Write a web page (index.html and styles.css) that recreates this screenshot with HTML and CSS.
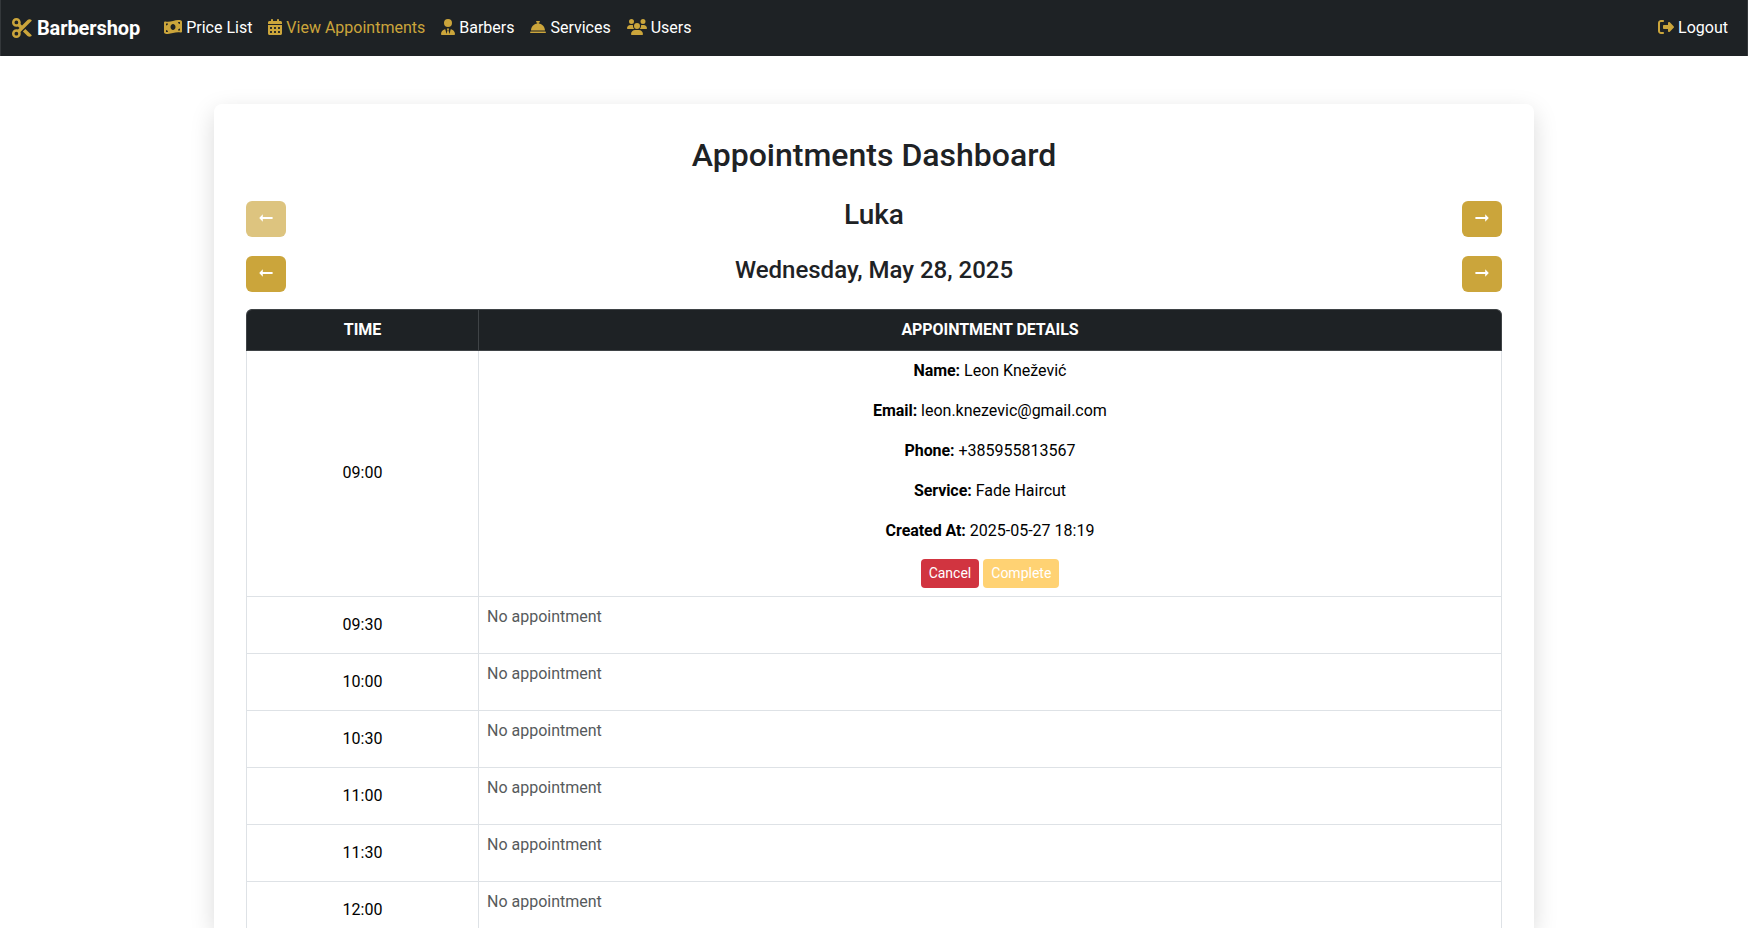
FILE: index.html
```html
<!DOCTYPE html>
<html lang="en">
<head>
<meta charset="utf-8">
<title>Barbershop</title>
<link rel="stylesheet" href="styles.css">
</head>
<body>
<nav class="navbar">
  <a class="brand"><svg class="icon brand-icon" viewBox="0 0 512 512"><path d="M256 192l-39.5-39.5c4.9-12.6 7.5-26.2 7.5-40.5C224 50.1 173.9 0 112 0S0 50.1 0 112s50.1 112 112 112c14.3 0 27.9-2.7 40.5-7.5L192 256l-39.5 39.5c-12.6-4.9-26.2-7.5-40.5-7.5C50.1 288 0 338.1 0 400s50.1 112 112 112s112-50.1 112-112c0-14.3-2.7-27.9-7.5-40.5L499.2 76.8c7.1-7.1 7.1-18.5 0-25.6c-28.3-28.3-74.1-28.3-102.4 0L256 192zm22.6 150.6L396.8 460.8c28.3 28.3 74.1 28.3 102.4 0c7.1-7.1 7.1-18.5 0-25.6L342.6 278.6l-64 64zM64 112a48 48 0 1 1 96 0 48 48 0 1 1 -96 0zm48 240a48 48 0 1 1 0 96 48 48 0 1 1 0-96z"/></svg> <span class="brand-name">Barbershop</span></a>
  <div class="links">
    <a class="link"><svg class="icon w18" viewBox="0 0 576 512"><path d="M0 112.5V422.3c0 18 10.1 35 27 41.3c87 32.5 174 10.3 261-11.9c79.8-20.3 159.6-40.7 239.3-18.9c23 6.3 48.7-9.5 48.7-33.4V89.7c0-18-10.1-35-27-41.3C462 15.9 375 38.1 288 60.3C208.2 80.6 128.4 100.9 48.7 79.1C25.6 72.8 0 88.6 0 112.5zM288 352c-44.2 0-80-43-80-96s35.8-96 80-96s80 43 80 96s-35.8 96-80 96zM64 352c35.3 0 64 28.7 64 64H64V352zm64-208c0 35.3-28.7 64-64 64V144h64zM512 304v64H448c0-35.3 28.7-64 64-64zM448 96h64v64c-35.3 0-64-28.7-64-64z"/></svg> Price List</a>
    <a class="link active"><svg class="icon w14" viewBox="0 0 448 512"><path d="M128 0c17.7 0 32 14.3 32 32V64H288V32c0-17.7 14.3-32 32-32s32 14.3 32 32V64h48c26.5 0 48 21.5 48 48v48H0V112C0 85.5 21.5 64 48 64H96V32c0-17.7 14.3-32 32-32zM0 192H448V464c0 26.5-21.5 48-48 48H48c-26.5 0-48-21.5-48-48V192zm64 80v32c0 8.8 7.2 16 16 16h32c8.8 0 16-7.2 16-16V272c0-8.8-7.2-16-16-16H80c-8.8 0-16 7.2-16 16zm128 0v32c0 8.8 7.2 16 16 16h32c8.8 0 16-7.2 16-16V272c0-8.8-7.2-16-16-16H208c-8.8 0-16 7.2-16 16zm144-16c-8.8 0-16 7.2-16 16v32c0 8.8 7.2 16 16 16h32c8.8 0 16-7.2 16-16V272c0-8.8-7.2-16-16-16H336zM64 400v32c0 8.8 7.2 16 16 16h32c8.8 0 16-7.2 16-16V400c0-8.8-7.2-16-16-16H80c-8.8 0-16 7.2-16 16zm144-16c-8.8 0-16 7.2-16 16v32c0 8.8 7.2 16 16 16h32c8.8 0 16-7.2 16-16V400c0-8.8-7.2-16-16-16H208zm112 16v32c0 8.8 7.2 16 16 16h32c8.8 0 16-7.2 16-16V400c0-8.8-7.2-16-16-16H336c-8.8 0-16 7.2-16 16z"/></svg> View Appointments</a>
    <a class="link"><svg class="icon w14" viewBox="0 0 448 512"><path d="M96 128a128 128 0 1 0 256 0A128 128 0 1 0 96 128zm94.5 200.2l18.6 31L175.8 483.1l-36-146.9c-2-8.1-9.8-13.4-17.9-11.3C51.9 342.4 0 405.8 0 481.3c0 17 13.8 30.7 30.7 30.7H162.5c0 0 0 0 .1 0H168 280h5.5c0 0 0 0 .1 0H417.3c17 0 30.7-13.8 30.7-30.7c0-75.5-51.9-138.9-121.9-156.4c-8.1-2-15.9 3.3-17.9 11.3l-36 146.9L238.9 359.2l18.6-31c6.4-10.7-1.3-24.2-13.7-24.2H224 204.3c-12.4 0-20.1 13.6-13.7 24.2z"/></svg> Barbers</a>
    <a class="link"><svg class="icon w16" viewBox="0 0 512 512"><path d="M216 64c-13.3 0-24 10.7-24 24s10.7 24 24 24h16v33.3C119.6 157.2 32 252.4 32 368H480c0-115.6-87.6-210.8-200-222.7V112h16c13.3 0 24-10.7 24-24s-10.7-24-24-24H256 216zM24 400c-13.3 0-24 10.7-24 24s10.7 24 24 24H488c13.3 0 24-10.7 24-24s-10.7-24-24-24H24z"/></svg> Services</a>
    <a class="link"><svg class="icon w20" viewBox="0 0 640 512"><path d="M144 0a80 80 0 1 1 0 160A80 80 0 1 1 144 0zM512 0a80 80 0 1 1 0 160A80 80 0 1 1 512 0zM0 298.7C0 239.8 47.8 192 106.7 192h42.7c15.9 0 31 3.5 44.6 9.7c-1.3 7.2-1.9 14.7-1.9 22.3c0 38.2 16.8 72.5 43.3 96c-.2 0-.4 0-.7 0H21.3C9.6 320 0 310.4 0 298.7zM405.3 320c-.2 0-.4 0-.7 0c26.6-23.5 43.3-57.8 43.3-96c0-7.6-.7-15-1.9-22.3c13.6-6.3 28.7-9.7 44.6-9.7h42.7C592.2 192 640 239.8 640 298.7c0 11.8-9.6 21.3-21.3 21.3H405.3zM224 224a96 96 0 1 1 192 0 96 96 0 1 1 -192 0zM128 485.3C128 411.7 187.7 352 261.3 352H378.7C452.3 352 512 411.7 512 485.3c0 14.7-11.9 26.7-26.7 26.7H154.7c-14.7 0-26.7-11.9-26.7-26.7z"/></svg> Users</a>
  </div>
  <a class="link logout"><svg class="icon w16" viewBox="0 0 512 512"><path d="M377.9 105.9L500.7 228.7c7.2 7.2 11.3 17.1 11.3 27.3s-4.1 20.1-11.3 27.3L377.9 406.1c-6.4 6.4-15 9.9-24 9.9c-18.7 0-33.9-15.2-33.9-33.9l0-62.1-128 0c-17.7 0-32-14.3-32-32l0-64c0-17.7 14.3-32 32-32l128 0 0-62.1c0-18.7 15.2-33.9 33.9-33.9c9 0 17.6 3.6 24 9.9zM160 96L96 96c-17.7 0-32 14.3-32 32l0 256c0 17.7 14.3 32 32 32l64 0c17.7 0 32 14.3 32 32s-14.3 32-32 32l-64 0c-53 0-96-43-96-96L0 128C0 75 43 32 96 32l64 0c17.7 0 32 14.3 32 32s-14.3 32-32 32z"/></svg> Logout</a>
</nav>
<main class="card">
  <h1 class="title">Appointments Dashboard</h1>
  <div class="switcher">
    <button class="arrow" disabled aria-label="Previous barber"><svg class="arrow-icon" viewBox="0 0 16 10"><path d="M1.2 5 4.8 1.2V4H14.6V6H4.8V8.8Z"/></svg></button>
    <h2 class="barber">Luka</h2>
    <button class="arrow" aria-label="Next barber"><svg class="arrow-icon" viewBox="0 0 16 10"><path d="M14.8 5 11.2 1.2V4H1.4V6H11.2V8.8Z"/></svg></button>
  </div>
  <div class="switcher">
    <button class="arrow" aria-label="Previous day"><svg class="arrow-icon" viewBox="0 0 16 10"><path d="M1.2 5 4.8 1.2V4H14.6V6H4.8V8.8Z"/></svg></button>
    <h3 class="date">Wednesday, May 28, 2025</h3>
    <button class="arrow" aria-label="Next day"><svg class="arrow-icon" viewBox="0 0 16 10"><path d="M14.8 5 11.2 1.2V4H1.4V6H11.2V8.8Z"/></svg></button>
  </div>
  <table class="schedule">
    <colgroup><col class="col-time"><col></colgroup>
    <thead><tr><th>TIME</th><th>APPOINTMENT DETAILS</th></tr></thead>
    <tbody>
      <tr><td class="time">09:00</td><td class="details">
        <p><strong>Name:</strong> Leon Knežević</p>
        <p><strong>Email:</strong> leon.knezevic@gmail.com</p>
        <p><strong>Phone:</strong> +385955813567</p>
        <p><strong>Service:</strong> Fade Haircut</p>
        <p><strong>Created At:</strong> 2025-05-27 18:19</p>
        <div class="actions"><button class="btn cancel">Cancel</button><button class="btn complete" disabled>Complete</button></div>
      </td></tr>
      <tr><td class="time">09:30</td><td class="empty"><p>No appointment</p></td></tr>
      <tr><td class="time">10:00</td><td class="empty"><p>No appointment</p></td></tr>
      <tr><td class="time">10:30</td><td class="empty"><p>No appointment</p></td></tr>
      <tr><td class="time">11:00</td><td class="empty"><p>No appointment</p></td></tr>
      <tr><td class="time">11:30</td><td class="empty"><p>No appointment</p></td></tr>
      <tr><td class="time">12:00</td><td class="empty"><p>No appointment</p></td></tr>
    </tbody>
  </table>
</main>
</body>
</html>
```
FILE: styles.css
```css
* { box-sizing: border-box; }
body {
  margin: 0;
  height: 928px;
  overflow: hidden;
  background: #fff;
  color: #000;
  font: 400 16px/24px Roboto, sans-serif;
}
.navbar {
  display: flex;
  align-items: center;
  height: 56px;
  padding: 0 11px;
  border-left: 1px solid #34383b;
  border-right: 1px solid #34383b;
  background: #1e2225;
  color: #fff;
}
.icon {
  display: inline-block;
  height: 16px;
  fill: #cba53b;
  vertical-align: -2px;
}
.w14 { width: 14px; }
.w16 { width: 16px; }
.w18 { width: 18px; }
.w20 { width: 20px; }
.brand {
  margin-right: 16px;
  font-size: 20px;
  line-height: 30px;
  font-weight: 700;
  letter-spacing: -0.09px;
  white-space: nowrap;
}
.brand-icon { width: 20px; height: 20px; vertical-align: -2.5px; }
.links { display: flex; }
.link { padding: 8px; white-space: nowrap; }
.active { color: #cba53b; }
.logout { margin-left: auto; }
.card {
  width: 1320px;
  height: 824px;
  margin: 48px auto 0;
  padding: 32px 32px 0;
  border-radius: 8px 8px 0 0;
  background: #fff;
  box-shadow: 0 8px 24px rgba(0, 0, 0, 0.15);
}
.title, .barber, .date {
  margin: 0 0 8px;
  color: #1e2225;
  font-weight: 500;
  line-height: 1.2;
  text-align: center;
}
.title { margin-bottom: 24px; font-size: 32px; }
.barber { font-size: 28px; }
.date { font-size: 24px; }
.switcher {
  display: flex;
  align-items: center;
  justify-content: space-between;
  margin-bottom: 16px;
}
.arrow {
  display: flex;
  align-items: center;
  justify-content: center;
  width: 40px;
  height: 36px;
  padding: 0 0 2px;
  border: 0;
  border-radius: 6px;
  background: #cba53b;
}
.arrow:disabled { opacity: 0.65; }
.arrow-icon { width: 16px; height: 10px; fill: #fff; }
.schedule {
  width: 100%;
  table-layout: fixed;
  border-collapse: separate;
  border-spacing: 0;
  border-left: 1px solid #dee2e6;
  border-radius: 6px 6px 0 0;
}
.col-time { width: 232px; }
.schedule th {
  height: 42px;
  padding: 8px;
  border: 1px solid #3f4346;
  border-left: 0;
  background: #1e2225;
  color: #fff;
  font-weight: 700;
  letter-spacing: -0.05px;
}
.schedule th:first-child { border-top-left-radius: 6px; box-shadow: -1px 0 #3f4346; }
.schedule th:last-child { border-top-right-radius: 6px; }
.schedule td {
  padding: 8px;
  border-right: 1px solid #dee2e6;
  border-bottom: 1px solid #dee2e6;
  vertical-align: top;
}
.schedule .time { vertical-align: middle; text-align: center; }
.details { text-align: center; }
.details strong { letter-spacing: -0.07px; }
.details p, .empty p { margin: 0 0 16px; }
.empty { color: #565a5c; }
.actions { display: flex; justify-content: center; gap: 4px; }
.btn {
  height: 29px;
  padding: 0 8px;
  border: 0;
  border-radius: 4px;
  color: #fff;
  font: 400 14px/21px Roboto, sans-serif;
}
.cancel { background: #d13440; }
.complete { background: #ffd273; }
```
